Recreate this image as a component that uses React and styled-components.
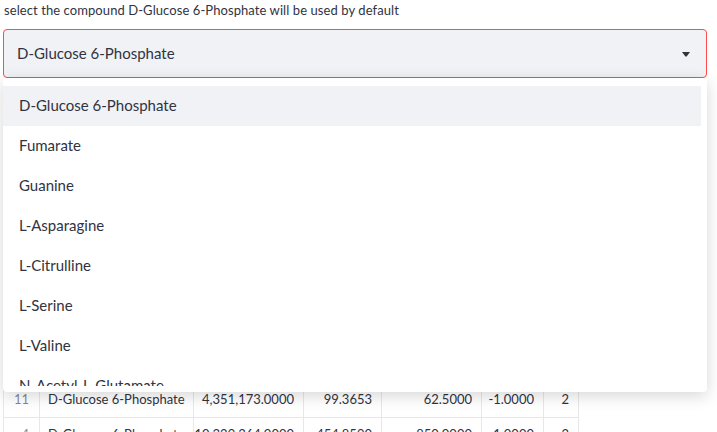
import React from "react";
import styled, { createGlobalStyle } from "styled-components";

const Global = createGlobalStyle`
  html, body { margin: 0; padding: 0; background: #ffffff; }
  body {
    font-family: "Source Sans Pro", Lato, "Liberation Sans", sans-serif;
    color: rgb(49, 51, 63);
    overflow: hidden;
  }
  * { box-sizing: border-box; }
`;

const Page = styled.div`
  position: relative;
  width: 717px;
  height: 432px;
  overflow: hidden;
  padding: 0 10px 0 3px;
`;

const Label = styled.label`
  display: block;
  font-size: 13px;
  letter-spacing: 0.08px;
  line-height: 21px;
  padding-left: 1px;
  margin-bottom: 8px;
  color: rgb(49, 51, 63);
`;

const SelectBox = styled.div`
  position: relative;
  height: 49px;
  width: 704px;
  display: flex;
  align-items: center;
  justify-content: space-between;
  padding: 0 16px 1px 13px;
  background: #f0f2f6;
  border: 1px solid #ff4b4b;
  border-radius: 4px;
  font-size: 15px;
`;

const Caret = styled.svg`
  width: 8px;
  height: 5px;
  margin-top: 2px;
`;

const Menu = styled.div`
  position: absolute;
  z-index: 2;
  left: 3px;
  top: 78px;
  width: 704px;
  padding: 8px 6px 6px 0;
  background: #ffffff;
  border-radius: 0 0 4px 4px;
  box-shadow: rgba(0, 0, 0, 0.16) 0px 4px 16px;
`;

const List = styled.ul`
  list-style: none;
  margin: 0;
  padding: 0;
  height: 300px;
  overflow: hidden;
`;

const Option = styled.li`
  height: 40px;
  display: flex;
  align-items: center;
  padding: 0 0 2px 16px;
  font-size: 15px;
  color: rgb(49, 51, 63);
  background: ${(p) => (p.$active ? "#f0f2f6" : "transparent")};
`;

const Table = styled.div`
  margin-top: 305px;
  width: 576px;
  border-left: 1px solid #e6e7ea;
  font-size: 13px;
`;

const Row = styled.div`
  display: grid;
  grid-template-columns: 36px 154px 110px 78px 100px 62px 35px;
  height: 35px;
`;

const Cell = styled.div`
  display: flex;
  align-items: center;
  justify-content: ${(p) => (p.$left ? "flex-start" : "flex-end")};
  padding-left: ${(p) => (p.$left ? "8px" : "0")};
  padding-right: ${(p) => (p.$left ? "0" : (p.$index ? "10px" : "9px"))};
  padding-bottom: 2px;
  border-right: 1px solid #e6e7ea;
  border-bottom: 1px solid #e6e7ea;
  color: ${(p) => (p.$index ? "rgba(49, 51, 63, 0.6)" : "rgb(49, 51, 63)")};
  white-space: nowrap;
  overflow: hidden;
`;

const options = [
  "D-Glucose 6-Phosphate",
  "Fumarate",
  "Guanine",
  "L-Asparagine",
  "L-Citrulline",
  "L-Serine",
  "L-Valine",
  "N-Acetyl-L-Glutamate",
];

const rows = [
  ["11", "D-Glucose 6-Phosphate", "4,351,173.0000", "99.3653", "62.5000", "-1.0000", "2"],
  ["4", "D-Glucose 6-Phosphate", "10,329,364.0000", "454.8590", "850.0000", "-1.0000", "2"],
];

export default function App() {
  return (
    <>
      <Global />
      <Page>
        <Label>select the compound D-Glucose 6-Phosphate will be used by default</Label>
        <SelectBox>
          <span>D-Glucose 6-Phosphate</span>
          <Caret viewBox="0 0 8 5">
            <path d="M0 0 H8 L4.6 4.6 H3.4 Z" fill="rgb(49,51,63)" />
          </Caret>
        </SelectBox>
        <Table>
          {rows.map((r, i) => (
            <Row key={i}>
              {r.map((c, j) => (
                <Cell key={j} $index={j === 0} $left={j === 1}>
                  {c}
                </Cell>
              ))}
            </Row>
          ))}
        </Table>
        <Menu>
          <List>
            {options.map((o, i) => (
              <Option key={o} $active={i === 0}>
                {o}
              </Option>
            ))}
          </List>
        </Menu>
      </Page>
    </>
  );
}
